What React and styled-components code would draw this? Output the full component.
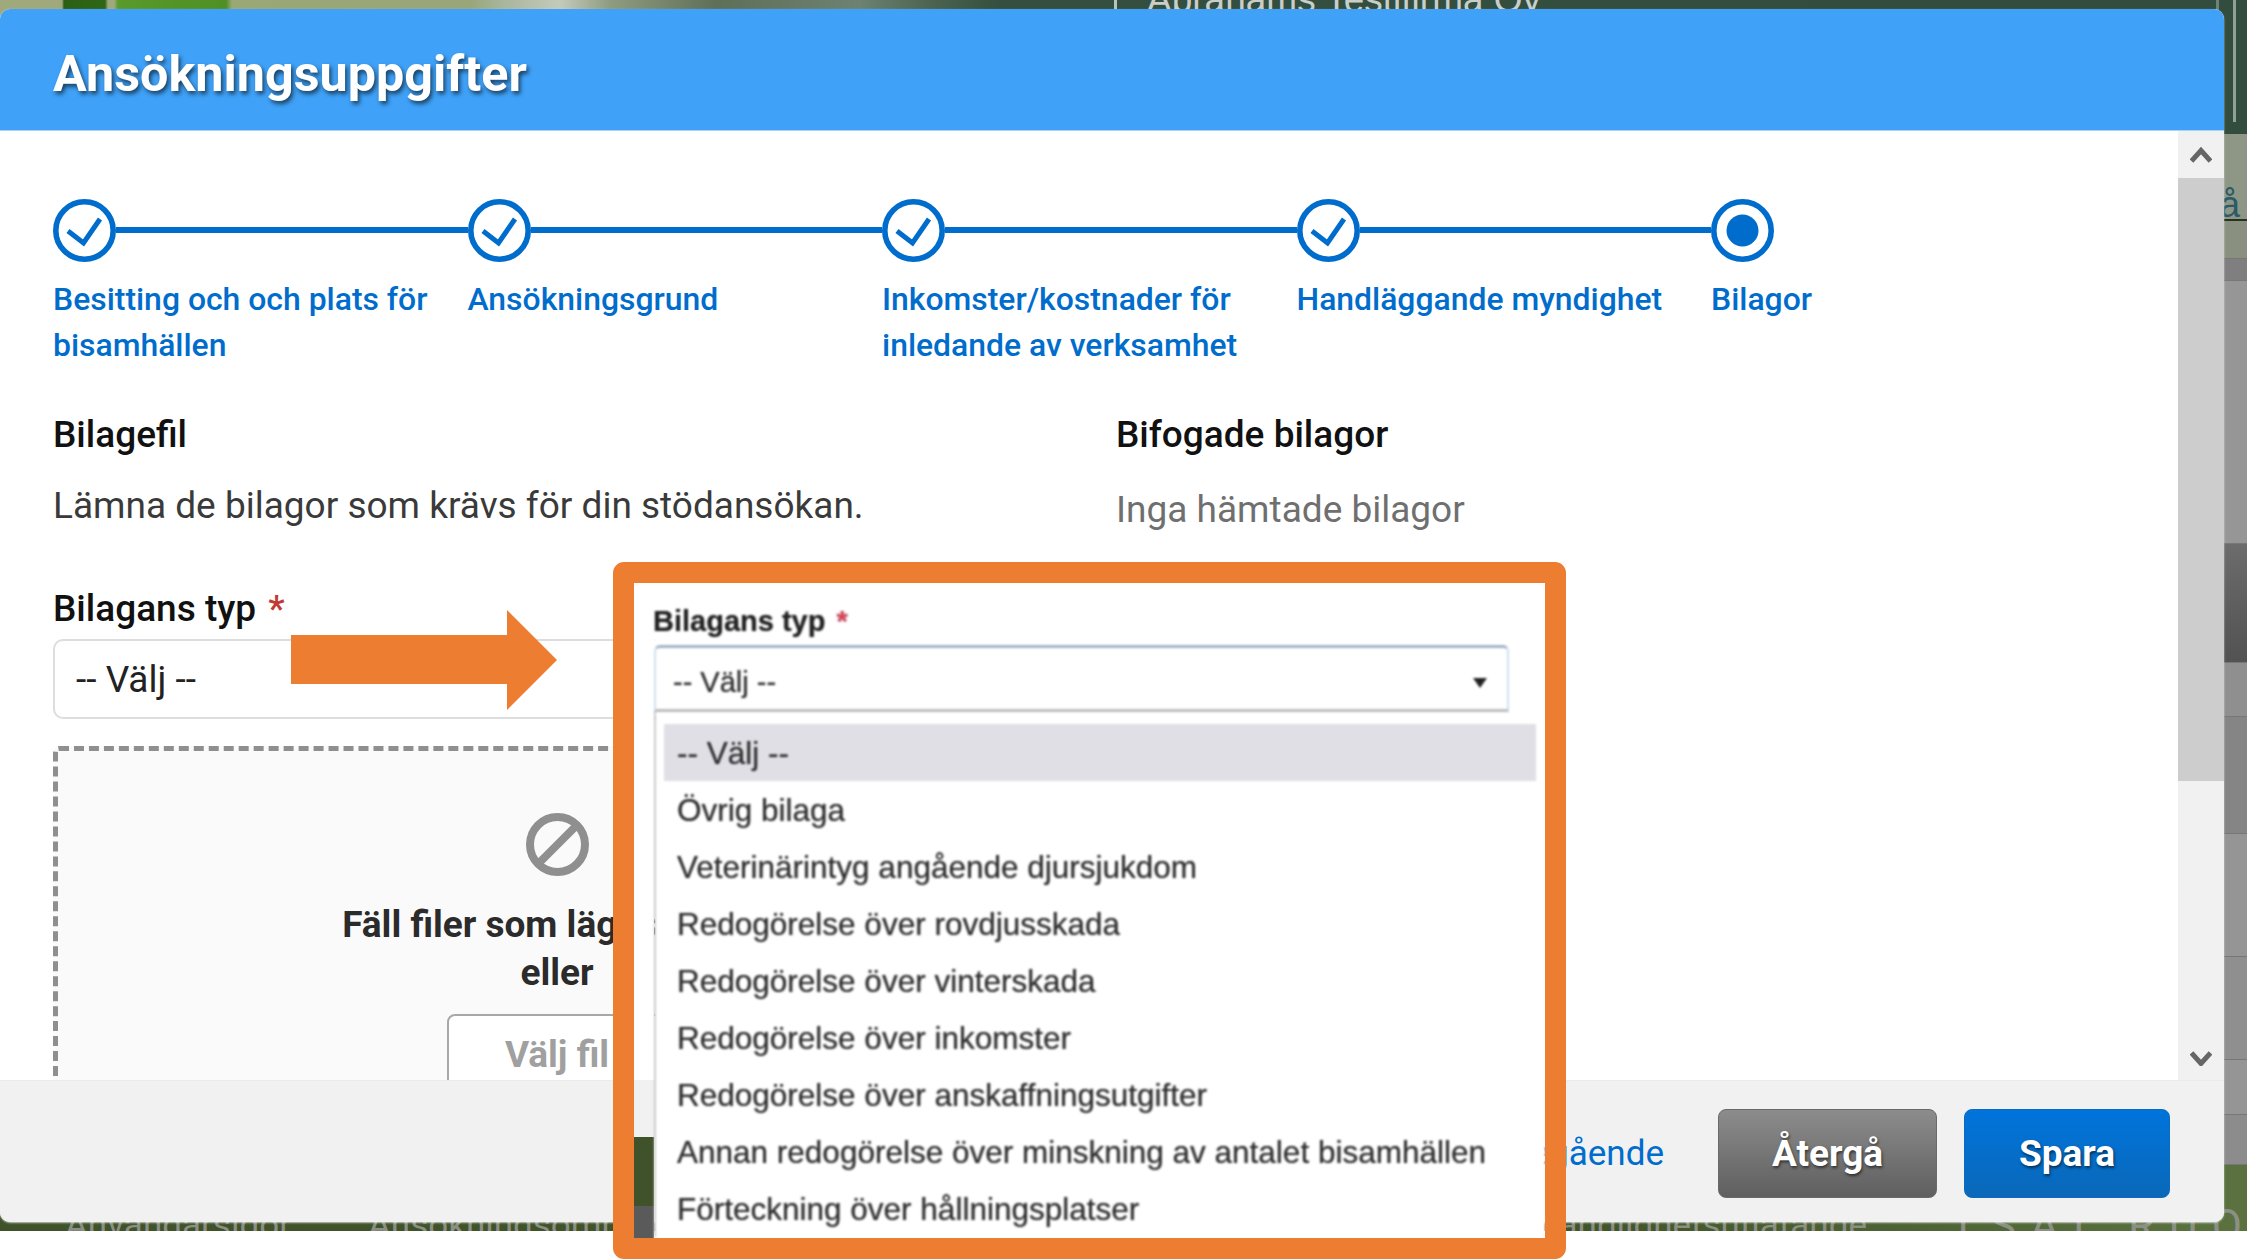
import React from 'react';
import styled, { createGlobalStyle } from 'styled-components';

const GlobalStyle = createGlobalStyle`
  html, body {
    margin: 0;
    padding: 0;
    background: #ffffff;
    overflow: hidden;
  }
  * {
    box-sizing: border-box;
  }
`;

const Screen = styled.div`
  position: relative;
  width: 2247px;
  height: 1259px;
  overflow: hidden;
  background: #ffffff;
  font-family: Roboto, "Liberation Sans", sans-serif;
`;

/* the page behind the modal, only slivers of it show */
const BehindPage = styled.div`
  display: flex;
  flex-direction: column;
  height: 1231px;
  overflow: hidden;
`;

const Banner = styled.div`
  display: flex;
  flex: 0 0 134px;
  padding-left: 1147px;
  overflow: hidden;
  background:
    linear-gradient(90deg, transparent 2233px, #8fa096 2233px, #8fa096 2236px, transparent 2236px) no-repeat 0 0 / 100% 122px,
    linear-gradient(90deg, transparent 1114px, #b9c2bb 1114px, #b9c2bb 1117px, transparent 1117px, transparent 2216px, #6f8277 2216px, #6f8277 2219px, transparent 2219px),
    linear-gradient(90deg, #a0a97c 0, #a0a97c 62px, #2c5f14 64px, #2f6616 105px, #a0a97c 108px, #a0a97c 114px, #5a9a2a 118px, #4f8f24 226px, #9aa876 232px, #98a67a 470px, #a8b49a 500px, #c3cabb 560px, #8f9c80 610px, #5f6f58 716px, #6d8272 860px, #4c6450 930px, #344f3f 1000px, #324c3d 2247px);
`;

const CompanyName = styled.div`
  margin-top: -21px;
  font-family: "Liberation Sans", sans-serif;
  font-size: 37px;
  line-height: 42px;
  color: #c9cec8;
  white-space: nowrap;
`;

const InfoBand = styled.div`
  display: flex;
  flex: 0 0 87px;
  justify-content: flex-end;
  align-items: flex-end;
  padding-right: 7px;
  background: #8e9686;
  border-bottom: 2px solid #28321f;
`;

const InfoLink = styled.span`
  font-family: "Liberation Sans", sans-serif;
  font-size: 36px;
  line-height: 28px;
  color: #2b5a68;
`;

const TableRow = styled.div`
  flex: 0 0 ${({ $h }) => $h}px;
  background: ${({ $bg }) => $bg};
  border-bottom: 1px solid #777777;
`;

const PageFooter = styled.div`
  display: flex;
  flex: 1;
  padding: 38px 0 0 65px;
  overflow: hidden;
  background: linear-gradient(90deg, #3f5229, #405429 70%, #5b7240);
`;

const FooterText = styled.div`
  flex: 0 0 ${({ $w }) => $w}px;
  font-size: ${({ $big }) => ($big ? 44 : 35)}px;
  letter-spacing: ${({ $big }) => ($big ? 14 : 0)}px;
  line-height: 46px;
  color: #8b8f84;
  text-align: ${({ $right }) => ($right ? 'right' : 'left')};
  white-space: nowrap;
`;

/* modal */
const Dialog = styled.div`
  position: absolute;
  top: 9px;
  left: 0;
  display: flex;
  flex-direction: column;
  width: 2224px;
  height: 1213px;
  overflow: hidden;
  background: #ffffff;
  border-radius: 10px;
  box-shadow: 0 1px 2px rgba(255, 255, 255, 0.7);
`;

const DialogHeader = styled.header`
  display: flex;
  flex: 0 0 122px;
  align-items: center;
  padding: 8px 0 0 53px;
  background: #3fa1f7;
  border-bottom: 1px solid #a9d2f5;
`;

const Title = styled.h1`
  margin: 0;
  font-size: 50.3px;
  font-weight: 700;
  color: #ffffff;
  text-shadow: 2px 3px 4px rgba(0, 0, 0, 0.6);
`;

const DialogBody = styled.div`
  display: flex;
  flex: 1;
  min-height: 0;
`;

const Content = styled.div`
  flex: 1;
  padding: 68px 0 0 53px;
  overflow: hidden;
`;

const Stepper = styled.ol`
  display: flex;
  margin: 0;
  padding: 0;
  list-style: none;
`;

const Step = styled.li`
  flex: 0 0 414.5px;
`;

const StepTrack = styled.div`
  display: flex;
  align-items: center;
  height: 63px;
`;

const StepLine = styled.div`
  flex: 1;
  height: 6px;
  margin-top: -2px;
  background: #006dcc;
`;

const StepLabel = styled.div`
  margin-top: 13.5px;
  padding-right: 20px;
  font-size: 31.9px;
  font-weight: 500;
  line-height: 46px;
  color: #006dcc;
`;

const Columns = styled.div`
  display: grid;
  grid-template-columns: 1008px 1fr;
  column-gap: 55px;
  margin-top: 44px;
`;

const SectionTitle = styled.h2`
  margin: 0;
  font-size: 37px;
  font-weight: 500;
  line-height: 46px;
  color: #111111;
`;

const Description = styled.p`
  margin: 25px 0 0;
  font-size: 37px;
  line-height: 46px;
  color: #3a3a3a;
`;

const EmptyNote = styled.p`
  margin: 29.5px 0 0;
  font-size: 37px;
  line-height: 46px;
  color: #6f6f6f;
`;

const FieldLabel = styled.label`
  display: block;
  margin: 57.5px 0 6.5px;
  font-size: 37px;
  font-weight: 500;
  line-height: 46px;
  color: #111111;
`;

const Required = styled.span`
  margin-left: 3px;
  color: #c23934;
`;

const SelectBox = styled.div`
  display: flex;
  align-items: center;
  height: 80px;
  padding: 2px 0 0 21px;
  font-size: 37px;
  color: #222222;
  background: #ffffff;
  border: 2px solid #dddddd;
  border-radius: 10px;
`;

const DropZone = styled.div`
  display: flex;
  flex-direction: column;
  align-items: center;
  height: 500px;
  margin-top: 27px;
  padding-top: 62px;
  background: #fafafa;
  border: 5px dashed #8f8f8f;
  border-bottom: 0;
  border-radius: 6px;
`;

const DropText = styled.div`
  margin-top: 25.5px;
  font-size: 37px;
  font-weight: 700;
  line-height: 48px;
  color: #2b2b2b;
  text-align: center;
`;

const FileButton = styled.div`
  display: flex;
  justify-content: center;
  align-items: center;
  width: 220px;
  height: 80px;
  margin-top: 17px;
  font-size: 37px;
  font-weight: 700;
  color: #a0a0a0;
  background: #ffffff;
  border: 2px solid #a8a8a8;
  border-radius: 8px;
`;

const Scrollbar = styled.div`
  display: flex;
  flex: 0 0 46px;
  flex-direction: column;
  background: #f1f1f1;
`;

const ScrollButton = styled.div`
  display: flex;
  flex: 0 0 47px;
  justify-content: center;
  align-items: center;
  color: #666666;
`;

const ScrollThumb = styled.div`
  flex: 0 0 603px;
  background: #cdcdcd;
`;

const ScrollRest = styled.div`
  flex: 1;
`;

const DialogFooter = styled.footer`
  display: flex;
  flex: 0 0 142px;
  justify-content: flex-end;
  align-items: center;
  padding: 3px 54px 0 0;
  background: #f1f1f1;
  border-top: 1px solid #ebebeb;
`;

const FooterLink = styled.a`
  margin-right: 54px;
  font-size: 35px;
  color: #006dcc;
`;

const ActionButton = styled.button`
  display: flex;
  justify-content: center;
  align-items: center;
  width: ${({ $w }) => $w}px;
  height: 89px;
  margin-left: ${({ $gap }) => $gap}px;
  font-family: Roboto, sans-serif;
  font-size: 37px;
  font-weight: 700;
  color: #ffffff;
  text-shadow: 1px 2px 3px rgba(0, 0, 0, 0.55);
  background: ${({ $primary }) =>
    $primary
      ? 'linear-gradient(180deg, #0074dc, #0a68b8)'
      : 'linear-gradient(180deg, #8c8c8c, #5f5f5f)'};
  border: 1px solid ${({ $primary }) => ($primary ? '#0a6bc0' : '#6a6a6a')};
  border-radius: 8px;
`;

/* annotation on top of the screenshot */
const ArrowMark = styled.svg`
  position: absolute;
  top: 610px;
  left: 291px;
`;

const Callout = styled.div`
  position: absolute;
  top: 562px;
  left: 613px;
  display: flex;
  width: 953px;
  height: 697px;
  overflow: hidden;
  border: 21px solid #ed7d31;
  border-radius: 11px;
`;

const ThroughStrip = styled.div`
  display: flex;
  flex: 0 0 20px;
  flex-direction: column;
`;

const ThroughPart = styled.div`
  flex: 0 0 ${({ $h }) => $h}px;
  background: ${({ $bg }) => $bg};
`;

const CalloutShot = styled.div`
  flex: 1;
  padding-top: 18px;
  font-family: "Liberation Sans", sans-serif;
  color: #2e2e2e;
  background: #ffffff;
  text-shadow: 0 0 1px rgba(30, 30, 30, 0.6);
  filter: blur(1px);
`;

const ShotLabel = styled.div`
  margin-left: -1px;
  font-size: 29px;
  font-weight: 700;
  line-height: 40px;
  color: #222222;
`;

const ShotRequired = styled.span`
  margin-left: 3px;
  color: #d8435a;
`;

const ShotSelect = styled.div`
  display: flex;
  justify-content: space-between;
  align-items: center;
  width: 855px;
  height: 67px;
  margin-top: 4px;
  padding: 8px 20px 0 17px;
  font-size: 29px;
  border: 2px solid #cfe0f0;
  border-top: 3px solid #a4b2c8;
  border-bottom: 3px solid #bdbdbd;
  border-radius: 6px 6px 0 0;
`;

const ShotCaret = styled.span`
  width: 0;
  height: 0;
  border-top: 10px solid #222222;
  border-right: 7px solid transparent;
  border-left: 7px solid transparent;
`;

const ShotList = styled.ul`
  margin: 0;
  padding: 12px 9px 0 8px;
  list-style: none;
  border-left: 2px solid #cccccc;
`;

const ShotOption = styled.li`
  height: 57px;
  padding: 1px 0 0 13px;
  font-size: 31.5px;
  line-height: 57px;
  background: ${({ $active }) => ($active ? '#dfdfe5' : 'transparent')};
  white-space: nowrap;
`;

const steps = [
  { label: 'Besitting och och plats för bisamhällen', done: true },
  { label: 'Ansökningsgrund', done: true },
  { label: 'Inkomster/kostnader för inledande av verksamhet', done: true },
  { label: 'Handläggande myndighet', done: true },
  { label: 'Bilagor', done: false },
];

const behindRows = [
  { h: 38, bg: '#8a9080' },
  { h: 22, bg: '#7f7f7f' },
  { h: 263, bg: '#969696' },
  { h: 119, bg: 'linear-gradient(180deg, #6c6c6c, #525252)' },
  { h: 54, bg: '#8f8f8f' },
  { h: 117, bg: '#858585' },
  { h: 123, bg: '#959595' },
  { h: 103, bg: '#8f8f8f' },
  { h: 55, bg: '#959595' },
  { h: 50, bg: '#8c8c8c' },
];

const options = [
  '-- Välj --',
  'Övrig bilaga',
  'Veterinärintyg angående djursjukdom',
  'Redogörelse över rovdjusskada',
  'Redogörelse över vinterskada',
  'Redogörelse över inkomster',
  'Redogörelse över anskaffningsutgifter',
  'Annan redogörelse över minskning av antalet bisamhällen',
  'Förteckning över hållningsplatser',
];

const StepIcon = ({ done }) => (
  <svg width="63" height="63" viewBox="0 0 63 63">
    <circle cx="31.5" cy="31.5" r="28.7" fill="#fff" stroke="#006dcc" strokeWidth="5.6" />
    {done ? (
      <polyline points="15,32 30.5,44 47,20" fill="none" stroke="#006dcc" strokeWidth="5" />
    ) : (
      <circle cx="31.5" cy="31.5" r="16" fill="#006dcc" />
    )}
  </svg>
);

const BanIcon = () => (
  <svg width="63" height="63" viewBox="0 0 63 63">
    <circle cx="31.5" cy="31.5" r="27.5" fill="none" stroke="#8f8f8f" strokeWidth="8" />
    <line x1="13" y1="50" x2="50" y2="13" stroke="#8f8f8f" strokeWidth="8" />
  </svg>
);

const Chevron = ({ up }) => (
  <svg width="22" height="18" viewBox="0 0 22 18">
    <polyline
      points={up ? '1.5,15 11,4.5 20.5,15' : '1.5,5 11,15.5 20.5,5'}
      fill="none"
      stroke="currentColor"
      strokeWidth="5"
    />
  </svg>
);

const App = () => (
  <Screen>
    <GlobalStyle />

    <BehindPage>
      <Banner>
        <CompanyName>Abrahams Testifirma Oy</CompanyName>
      </Banner>
      <InfoBand>
        <InfoLink>å</InfoLink>
      </InfoBand>
      {behindRows.map((row, i) => (
        <TableRow key={i} $h={row.h} $bg={row.bg} />
      ))}
      <PageFooter>
        <FooterText $w={303}>Användarsidor</FooterText>
        <FooterText $w={1100}>Ansökningsområden</FooterText>
        <FooterText $w={399} $right>Tillgänglighetsutlåtande</FooterText>
        <FooterText $w={83} />
        <FooterText $w={178} $big>TSAI</FooterText>
        <FooterText $w={200} $big>RUOK</FooterText>
      </PageFooter>
    </BehindPage>

    <Dialog>
      <DialogHeader>
        <Title>Ansökningsuppgifter</Title>
      </DialogHeader>

      <DialogBody>
        <Content>
          <Stepper>
            {steps.map((step, i) => (
              <Step key={step.label}>
                <StepTrack>
                  <StepIcon done={step.done} />
                  {i < steps.length - 1 && <StepLine />}
                </StepTrack>
                <StepLabel>{step.label}</StepLabel>
              </Step>
            ))}
          </Stepper>

          <Columns>
            <div>
              <SectionTitle>Bilagefil</SectionTitle>
              <Description>Lämna de bilagor som krävs för din stödansökan.</Description>
              <FieldLabel>
                Bilagans typ <Required>*</Required>
              </FieldLabel>
              <SelectBox>-- Välj --</SelectBox>
              <DropZone>
                <BanIcon />
                <DropText>
                  Fäll filer som läggs till här
                  <br />
                  eller
                </DropText>
                <FileButton>Välj fil</FileButton>
              </DropZone>
            </div>
            <div>
              <SectionTitle>Bifogade bilagor</SectionTitle>
              <EmptyNote>Inga hämtade bilagor</EmptyNote>
            </div>
          </Columns>
        </Content>

        <Scrollbar>
          <ScrollButton>
            <Chevron up />
          </ScrollButton>
          <ScrollThumb />
          <ScrollRest />
          <ScrollButton>
            <Chevron />
          </ScrollButton>
        </Scrollbar>
      </DialogBody>

      <DialogFooter>
        <FooterLink>Föregående</FooterLink>
        <ActionButton $w={219}>Återgå</ActionButton>
        <ActionButton $w={206} $gap={27} $primary>
          Spara
        </ActionButton>
      </DialogFooter>
    </Dialog>

    <ArrowMark width="266" height="100" viewBox="0 0 266 100">
      <polygon points="0,25 216,25 216,0 266,50 216,100 216,74 0,74" fill="#ed7d31" />
    </ArrowMark>

    <Callout>
      <ThroughStrip>
        <ThroughPart $h={497} $bg="#ffffff" />
        <ThroughPart $h={57} $bg="#f1f1f1" />
        <ThroughPart $h={69} $bg="#3f5229" />
        <ThroughPart $h={32} $bg="#5a5a5a" />
      </ThroughStrip>
      <CalloutShot>
        <ShotLabel>
          Bilagans typ <ShotRequired>*</ShotRequired>
        </ShotLabel>
        <ShotSelect>
          -- Välj --
          <ShotCaret />
        </ShotSelect>
        <ShotList>
          {options.map((option, i) => (
            <ShotOption key={option} $active={i === 0}>
              {option}
            </ShotOption>
          ))}
        </ShotList>
      </CalloutShot>
    </Callout>
  </Screen>
);

export default App;
